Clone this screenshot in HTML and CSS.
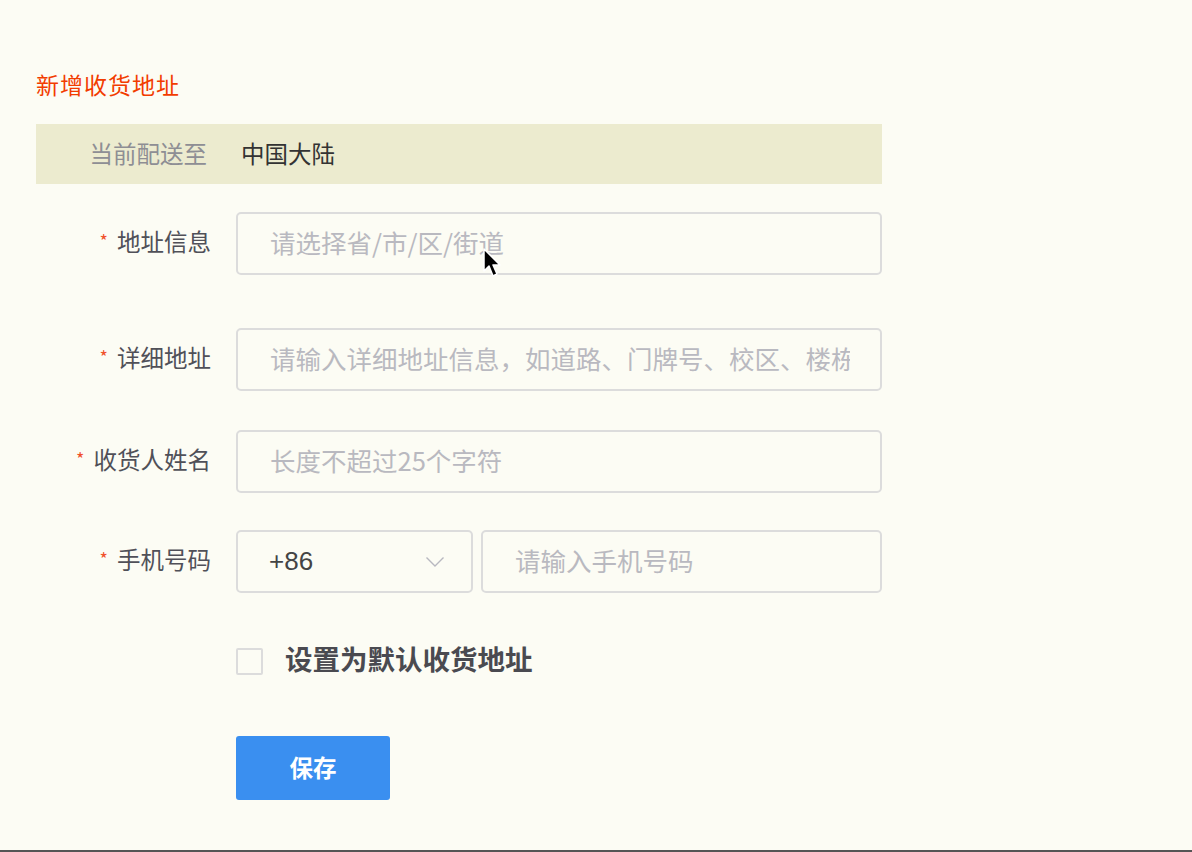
FILE: index.html
```html
<!DOCTYPE html>
<html lang="zh">
<head>
<meta charset="utf-8">
<title>新增收货地址</title>
<link rel="stylesheet" href="styles.css">
</head>
<body>
<div class="page">
  <h1 class="title">新增收货地址</h1>
  <div class="band">
    <span class="band-label">当前配送至</span>
    <span class="band-value">中国大陆</span>
  </div>
  <form class="form">
    <div class="row row-addr">
      <label class="label"><span class="star">*</span>地址信息</label>
      <div class="input"><span class="ph">请选择省/市/区/街道</span></div>
    </div>
    <div class="row row-detail">
      <label class="label"><span class="star">*</span>详细地址</label>
      <div class="input"><span class="ph">请输入详细地址信息，如道路、门牌号、校区、楼栋号、单元等</span></div>
    </div>
    <div class="row row-name">
      <label class="label"><span class="star">*</span>收货人姓名</label>
      <div class="input"><span class="ph">长度不超过25个字符</span></div>
    </div>
    <div class="row row-phone">
      <label class="label"><span class="star">*</span>手机号码</label>
      <div class="phone">
        <div class="select">
          <span class="val">+86</span>
          <svg class="chev" width="20" height="12" viewBox="0 0 20 12"><path d="M1.5 1.5 L10 10 L18.5 1.5" fill="none" stroke="#b8b8c0" stroke-width="1.4"/></svg>
        </div>
        <div class="input input-phone"><span class="ph">请输入手机号码</span></div>
      </div>
    </div>
    <div class="row row-check">
      <span class="label"></span>
      <div class="check"><span class="box"></span><span class="check-text">设置为默认收货地址</span></div>
    </div>
    <div class="row row-btn">
      <span class="label"></span>
      <button type="button" class="btn">保存</button>
    </div>
  </form>
  <svg class="cursor" width="20" height="30" viewBox="0 0 20 30"><path d="M1 1 L1 23 L6 18 L10 28 L14 26 L10 17 L17 17 Z" fill="#000" stroke="#fff" stroke-width="1.5" stroke-linejoin="round"/></svg>
</div>
</body>
</html>
```
FILE: styles.css
```css
html, body {
  margin: 0;
  padding: 0;
}
body {
  background: #fcfcf4;
  font-family: "Noto Sans CJK SC", "Noto Sans", sans-serif;
}
.page {
  position: relative;
  width: 1192px;
  height: 850px;
  border-bottom: 2px solid #555;
  padding: 0 0 0 36px;
  box-sizing: content-box;
}
.title {
  margin: 0;
  padding-top: 68px;
  font-size: 23px;
  line-height: 32px;
  font-weight: normal;
  color: #f23c00;
  letter-spacing: 1px;
}
.band {
  margin-top: 24px;
  width: 846px;
  height: 60px;
  background: #ecebcf;
  display: flex;
  align-items: center;
  font-size: 23.5px;
  padding-bottom: 3px;
  box-sizing: border-box;
}
.band-label {
  width: 171px;
  text-align: right;
  color: #8e8e94;
}
.band-value {
  margin-left: 34px;
  color: #333;
}
.form {
  width: 846px;
}
.row {
  display: flex;
  align-items: center;
}
.row-addr { margin-top: 28px; }
.row-detail { margin-top: 53px; }
.row-name { margin-top: 39px; }
.row-phone { margin-top: 37px; }
.row-check { margin-top: 48px; }
.row-btn { margin-top: 55px; }
.label {
  width: 175px;
  flex: none;
  text-align: right;
  font-size: 23.5px;
  color: #505058;
  margin-right: 25px;
  white-space: nowrap;
  padding-bottom: 5px;
}
.star {
  color: #f0502a;
  font-size: 18px;
  margin-right: 9px;
  position: relative;
  top: -3px;
}
.input {
  flex: 1;
  height: 63px;
  box-sizing: border-box;
  border: 2px solid #dcdcdc;
  border-radius: 5px;
  display: flex;
  align-items: center;
  padding: 0 30px 5px 32px;
  overflow: hidden;
  white-space: nowrap;
}
.ph {
  font-size: 25.5px;
  color: #b9b9c0;
  overflow: hidden;
}
.phone {
  flex: 1;
  display: flex;
  gap: 8px;
}
.select {
  width: 237px;
  height: 63px;
  box-sizing: border-box;
  border: 2px solid #dcdcdc;
  border-radius: 5px;
  display: flex;
  align-items: center;
  justify-content: space-between;
  padding: 0 26px 0 31px;
}
.val {
  font-family: "Liberation Sans", "Noto Sans CJK SC", sans-serif;
  font-size: 26px;
  color: #444;
}
.chev { display: block; }
.input-phone { padding-left: 32px; }
.check {
  display: flex;
  align-items: center;
}
.box {
  width: 27px;
  height: 27px;
  box-sizing: border-box;
  border: 2px solid #dcdcdc;
  border-radius: 2px;
  margin-right: 22px;
}
.check-text {
  font-size: 27.5px;
  font-weight: bold;
  color: #4a4a50;
  position: relative;
  top: -3px;
}
.btn {
  width: 154px;
  height: 64px;
  border: none;
  border-radius: 3px;
  background: #3a8ff0;
  color: #fff;
  font-family: "Noto Sans CJK SC", sans-serif;
  font-size: 23.5px;
  font-weight: bold;
  cursor: pointer;
  padding-bottom: 4px;
}
.cursor {
  position: absolute;
  left: 483px;
  top: 248px;
}
```
